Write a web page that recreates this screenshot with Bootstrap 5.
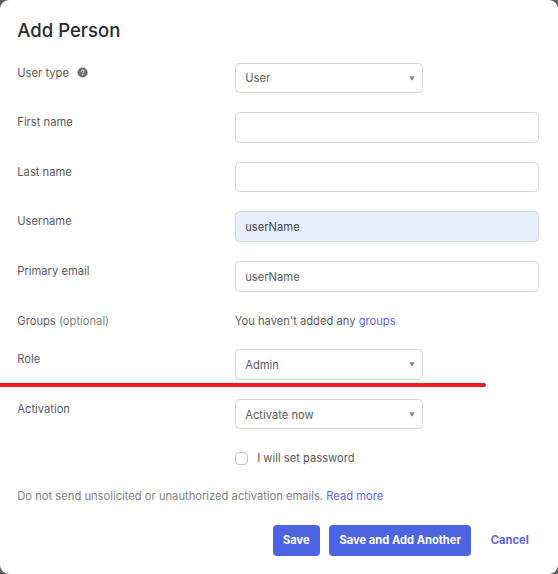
<!DOCTYPE html>
<html lang="en">
<head>
<meta charset="utf-8">
<meta name="viewport" content="width=device-width, initial-scale=1">
<title>Add Person</title>
<link href="https://cdn.jsdelivr.net/npm/bootstrap@5.3.0/dist/css/bootstrap.min.css" rel="stylesheet">
<style>
html{background:#5e5e5e}
body{background:#5e5e5e;font-family:Inter,sans-serif;font-size:11.2px;line-height:16px;color:#5b5b5d;overflow:hidden}
a{color:#5c69e0;text-decoration:none}
.dialog-panel{width:557.5px;height:574px;border:0;border-radius:9px;padding:17.8px 18.5px 0 17.3px;color:inherit;background:#fff}
.dialog-title{font-size:18.55px;line-height:24px;font-weight:500;color:#2b2b2e;margin:0 0 20.9px}
.form-line{height:30.6px;margin-bottom:19px}
.line-label{width:217.4px;padding-top:2px;flex:none}
.help-icon{margin:2px 0 0 8.5px}
.form-control,.pick{border:1px solid #d6d6d8;border-radius:4.5px;font-size:11.2px;line-height:16px;padding:.8px 9.5px 0;height:30.6px;color:#5b5b5d;background:#fff}
.form-control.autofilled{background:#e8effd;color:#45484f}
.pick{width:188px;padding-right:6.8px}
.groups-line{height:19.6px;margin-bottom:19px;padding-top:1.4px}
.form-check-input.square{width:13px;height:13px;margin:0;border:1.5px solid #c6c6c8;border-radius:4px;flex:none}
.check-line{padding-top:1.9px;margin:0 0 21.8px 217.4px;gap:9.5px}
.quiet{color:#818183}
.footer-actions{margin-top:20.9px;gap:9.3px}
.btn.action{--bs-btn-font-size:11.15px;--bs-btn-font-weight:700;--bs-btn-border-radius:4px;--bs-btn-line-height:16px;height:30.5px;padding:0 10.3px;border:0}
.btn.solid{--bs-btn-bg:#4c64e1;--bs-btn-color:#fff;--bs-btn-hover-bg:#4058d0;--bs-btn-hover-color:#fff}
.btn.plain{--bs-btn-color:#5c69e0}
.red-rule{left:0;top:382.7px;width:486px;height:4.2px;background:#ed1c24;border-radius:0 2px 2px 0}
</style>
</head>
<body>
<main class="card dialog-panel">
  <h1 class="dialog-title">Add Person</h1>
  <form>
    <div class="form-line d-flex">
      <div class="line-label d-flex align-items-start">User type
        <svg class="help-icon" width="11" height="11" viewBox="0 0 11 11" aria-hidden="true"><circle cx="5.6" cy="5.5" r="5.1" fill="#707070"/><path d="M4.2 4.5c0-1 .6-1.5 1.4-1.5s1.4.5 1.4 1.2c0 .9-1.3 1-1.3 2" fill="none" stroke="#fff" stroke-width="1"/><circle cx="5.7" cy="7.7" r=".65" fill="#fff"/></svg>
      </div>
      <div class="pick d-flex align-items-center justify-content-between"><span>User</span><svg width="6" height="5" viewBox="0 0 6 5"><path d="M.3.3h5.4L3 4.7z" fill="#838385"/></svg></div>
    </div>
    <div class="form-line d-flex"><label class="line-label" for="first">First name</label><input id="first" class="form-control" type="text"></div>
    <div class="form-line d-flex"><label class="line-label" for="last">Last name</label><input id="last" class="form-control" type="text"></div>
    <div class="form-line d-flex"><label class="line-label" for="user">Username</label><input id="user" class="form-control autofilled" type="text" value="userName"></div>
    <div class="form-line d-flex"><label class="line-label" for="mail">Primary email</label><input id="mail" class="form-control" type="text" value="userName"></div>
    <div class="groups-line d-flex align-items-center"><div class="line-label p-0">Groups <span class="quiet">(optional)</span></div><div>You haven't added any <a href="#">groups</a></div></div>
    <div class="form-line d-flex"><div class="line-label">Role</div>
      <div class="pick d-flex align-items-center justify-content-between"><span>Admin</span><svg width="6" height="5" viewBox="0 0 6 5"><path d="M.3.3h5.4L3 4.7z" fill="#838385"/></svg></div>
    </div>
    <div class="form-line d-flex"><div class="line-label">Activation</div>
      <div class="pick d-flex align-items-center justify-content-between"><span>Activate now</span><svg width="6" height="5" viewBox="0 0 6 5"><path d="M.3.3h5.4L3 4.7z" fill="#838385"/></svg></div>
    </div>
    <div class="check-line d-flex align-items-center"><input class="form-check-input square" type="checkbox" id="pw"><label for="pw">I will set password</label></div>
    <div class="quiet">Do not send unsolicited or unauthorized activation emails. <a href="#">Read more</a></div>
    <div class="footer-actions d-flex justify-content-end">
      <button type="button" class="btn action solid">Save</button>
      <button type="button" class="btn action solid">Save and Add Another</button>
      <button type="button" class="btn action plain">Cancel</button>
    </div>
  </form>
  <div class="red-rule position-absolute"></div>
</main>
<script src="https://cdn.jsdelivr.net/npm/bootstrap@5.3.0/dist/js/bootstrap.bundle.min.js"></script>
</body>
</html>
